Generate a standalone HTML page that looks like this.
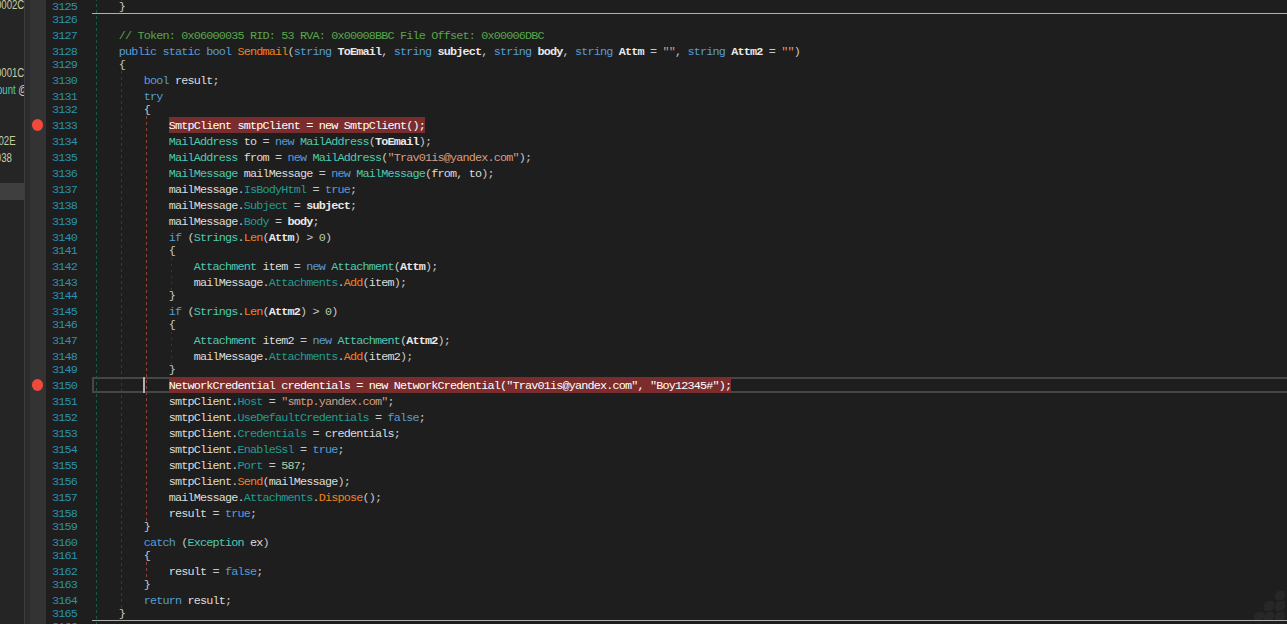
<!DOCTYPE html>
<html><head><meta charset="utf-8"><style>
html,body{margin:0;padding:0;width:1287px;height:624px;overflow:hidden;background:#1e1e1e;}
body{position:relative;font-family:"Liberation Mono",monospace;}
#left{position:absolute;left:0;top:0;width:24px;height:624px;background:#252526;overflow:hidden;}
#left .t{position:absolute;font-family:"Liberation Sans",sans-serif;font-size:13px;line-height:16px;white-space:pre;color:#c2cfa2;transform:scaleX(0.74);transform-origin:100% 50%;}
#div1{position:absolute;left:24px;top:0;width:1px;height:624px;background:#3c3c42;}
#strip{position:absolute;left:25px;top:0;width:5px;height:624px;background:#2c2c2c;}
#gutter{position:absolute;left:30px;top:0;width:16px;height:624px;background:#333333;}
.bp{position:absolute;left:31.8px;width:11.4px;height:12px;border-radius:50%;background:#f24a3a;}
.ln{position:absolute;left:46px;width:31px;text-align:right;font-size:11.8px;line-height:16px;letter-spacing:-0.83px;color:#2b91af;white-space:pre;}
.code{position:absolute;font-size:11.8px;line-height:16px;letter-spacing:-0.83px;white-space:pre;color:#dcdcdc;}
.hl{position:absolute;height:16px;background:#7b2d2d;}
.k{color:#569cd6} .c{color:#57a64a} .m{color:#f0821e} .t{color:#4ec9b0} .p{color:#e8e8e8;font-weight:bold}
.l{color:#dcdcdc} .r{color:#229c90} .s{color:#d69d85} .n{color:#b5cea8} .o{color:#c8c8c8} .d{color:#dcdcdc}
.hlt span{color:#ffffff}
.sep{position:absolute;left:92px;width:1195px;height:1px;background:#b0b0b0;}
.g{position:absolute;width:1px;}
.grip{position:absolute;width:9.5px;height:9.5px;border-radius:50% 20% 50% 20%;background:#272727;}
#cur{position:absolute;left:92px;top:377px;width:1195px;height:16px;box-sizing:border-box;border:2px solid #464646;border-right:none;}
#caret{position:absolute;left:143px;top:377px;width:2px;height:16px;background:#b0b0b0;}
</style></head><body>
<div id="left">
<div class="t" style="top:-3px;right:0">0002C</div>
<div class="t" style="top:65px;right:0">0001C</div>
<div class="t" style="top:82px;right:-4px"><span style="color:#4ec9b0">ount</span><span style="color:#d4d4d4"> @</span></div>
<div style="position:absolute;left:0;top:183px;width:24px;height:17px;background:#3f3f40"></div>
<div class="t" style="top:133px;right:8px">0002E</div>
<div class="t" style="top:150px;right:12px">0038</div>
</div>
<div id="div1"></div>
<div id="strip"></div>
<div id="gutter"></div>
<div class="bp" style="top:118.5px"></div>
<div class="bp" style="top:378.5px"></div>
<div class="g" style="left:96px;top:-2px;height:628px;background:repeating-linear-gradient(to bottom,#195843 0 3px,transparent 3px 6px)"></div>
<div class="g" style="left:121px;top:-1px;height:2px;background:repeating-linear-gradient(to bottom,#1a3f60 0 3px,transparent 3px 6px)"></div>
<div class="g" style="left:121px;top:71px;height:537px;background:repeating-linear-gradient(to bottom,#1a3f60 0 3px,transparent 3px 6px)"></div>
<div class="g" style="left:146px;top:116px;height:405px;background:repeating-linear-gradient(to bottom,#8e4639 0 3px,transparent 3px 6px)"></div>
<div class="g" style="left:146px;top:562px;height:17px;background:repeating-linear-gradient(to bottom,#8e4639 0 3px,transparent 3px 6px)"></div>
<div class="g" style="left:171px;top:258px;height:32px;background:repeating-linear-gradient(to bottom,#1a4a1e 0 2px,transparent 2px 6px)"></div>
<div class="g" style="left:171px;top:332px;height:32px;background:repeating-linear-gradient(to bottom,#1a4a1e 0 2px,transparent 2px 6px)"></div>
<div class="sep" style="top:13px"></div>
<div class="sep" style="top:620px"></div>
<div id="cur"></div>
<div class="ln" style="top:-1px">3125</div>
<div class="code" style="top:-1px;left:118.75px"><span class="o">}</span></div>
<div class="ln" style="top:12px">3126</div>
<div class="ln" style="top:28px">3127</div>
<div class="code" style="top:28px;left:118.75px"><span class="c">// Token: 0x06000035 RID: 53 RVA: 0x00008BBC File Offset: 0x00006DBC</span></div>
<div class="ln" style="top:44px">3128</div>
<div class="code" style="top:44px;left:118.75px"><span class="k">public</span><span class="d"> </span><span class="k">static</span><span class="d"> </span><span class="k">bool</span><span class="d"> </span><span class="m">Sendmail</span><span class="o">(</span><span class="k">string</span><span class="d"> </span><span class="p">ToEmail</span><span class="o">, </span><span class="k">string</span><span class="d"> </span><span class="p">subject</span><span class="o">, </span><span class="k">string</span><span class="d"> </span><span class="p">body</span><span class="o">, </span><span class="k">string</span><span class="d"> </span><span class="p">Attm</span><span class="o"> = </span><span class="s">&quot;&quot;</span><span class="o">, </span><span class="k">string</span><span class="d"> </span><span class="p">Attm2</span><span class="o"> = </span><span class="s">&quot;&quot;</span><span class="o">)</span></div>
<div class="ln" style="top:57px">3129</div>
<div class="code" style="top:57px;left:118.75px"><span class="o">{</span></div>
<div class="ln" style="top:73px">3130</div>
<div class="code" style="top:73px;left:143.75px"><span class="k">bool</span><span class="d"> </span><span class="l">result</span><span class="o">;</span></div>
<div class="ln" style="top:89px">3131</div>
<div class="code" style="top:89px;left:143.75px"><span class="k">try</span></div>
<div class="ln" style="top:102px">3132</div>
<div class="code" style="top:102px;left:143.75px"><span class="o">{</span></div>
<div class="ln" style="top:118px">3133</div>
<div class="hl" style="top:117px;left:168.75px;width:256.25px"></div>
<div class="code hlt" style="top:118px;left:168.75px"><span class="t">SmtpClient</span><span class="d"> </span><span class="l">smtpClient</span><span class="o"> = </span><span class="k">new</span><span class="d"> </span><span class="t">SmtpClient</span><span class="o">();</span></div>
<div class="ln" style="top:134px">3134</div>
<div class="code" style="top:134px;left:168.75px"><span class="t">MailAddress</span><span class="d"> </span><span class="l">to</span><span class="o"> = </span><span class="k">new</span><span class="d"> </span><span class="t">MailAddress</span><span class="o">(</span><span class="p">ToEmail</span><span class="o">);</span></div>
<div class="ln" style="top:150px">3135</div>
<div class="code" style="top:150px;left:168.75px"><span class="t">MailAddress</span><span class="d"> </span><span class="l">from</span><span class="o"> = </span><span class="k">new</span><span class="d"> </span><span class="t">MailAddress</span><span class="o">(</span><span class="s">&quot;Trav01is@yandex.com&quot;</span><span class="o">);</span></div>
<div class="ln" style="top:166px">3136</div>
<div class="code" style="top:166px;left:168.75px"><span class="t">MailMessage</span><span class="d"> </span><span class="l">mailMessage</span><span class="o"> = </span><span class="k">new</span><span class="d"> </span><span class="t">MailMessage</span><span class="o">(</span><span class="l">from</span><span class="o">, </span><span class="l">to</span><span class="o">);</span></div>
<div class="ln" style="top:182px">3137</div>
<div class="code" style="top:182px;left:168.75px"><span class="l">mailMessage</span><span class="o">.</span><span class="r">IsBodyHtml</span><span class="o"> = </span><span class="k">true</span><span class="o">;</span></div>
<div class="ln" style="top:198px">3138</div>
<div class="code" style="top:198px;left:168.75px"><span class="l">mailMessage</span><span class="o">.</span><span class="r">Subject</span><span class="o"> = </span><span class="p">subject</span><span class="o">;</span></div>
<div class="ln" style="top:214px">3139</div>
<div class="code" style="top:214px;left:168.75px"><span class="l">mailMessage</span><span class="o">.</span><span class="r">Body</span><span class="o"> = </span><span class="p">body</span><span class="o">;</span></div>
<div class="ln" style="top:230px">3140</div>
<div class="code" style="top:230px;left:168.75px"><span class="k">if</span><span class="d"> </span><span class="o">(</span><span class="t">Strings</span><span class="o">.</span><span class="m">Len</span><span class="o">(</span><span class="p">Attm</span><span class="o">) &gt; </span><span class="n">0</span><span class="o">)</span></div>
<div class="ln" style="top:243px">3141</div>
<div class="code" style="top:243px;left:168.75px"><span class="o">{</span></div>
<div class="ln" style="top:259px">3142</div>
<div class="code" style="top:259px;left:193.75px"><span class="t">Attachment</span><span class="d"> </span><span class="l">item</span><span class="o"> = </span><span class="k">new</span><span class="d"> </span><span class="t">Attachment</span><span class="o">(</span><span class="p">Attm</span><span class="o">);</span></div>
<div class="ln" style="top:275px">3143</div>
<div class="code" style="top:275px;left:193.75px"><span class="l">mailMessage</span><span class="o">.</span><span class="r">Attachments</span><span class="o">.</span><span class="m">Add</span><span class="o">(</span><span class="l">item</span><span class="o">);</span></div>
<div class="ln" style="top:288px">3144</div>
<div class="code" style="top:288px;left:168.75px"><span class="o">}</span></div>
<div class="ln" style="top:304px">3145</div>
<div class="code" style="top:304px;left:168.75px"><span class="k">if</span><span class="d"> </span><span class="o">(</span><span class="t">Strings</span><span class="o">.</span><span class="m">Len</span><span class="o">(</span><span class="p">Attm2</span><span class="o">) &gt; </span><span class="n">0</span><span class="o">)</span></div>
<div class="ln" style="top:317px">3146</div>
<div class="code" style="top:317px;left:168.75px"><span class="o">{</span></div>
<div class="ln" style="top:333px">3147</div>
<div class="code" style="top:333px;left:193.75px"><span class="t">Attachment</span><span class="d"> </span><span class="l">item2</span><span class="o"> = </span><span class="k">new</span><span class="d"> </span><span class="t">Attachment</span><span class="o">(</span><span class="p">Attm2</span><span class="o">);</span></div>
<div class="ln" style="top:349px">3148</div>
<div class="code" style="top:349px;left:193.75px"><span class="l">mailMessage</span><span class="o">.</span><span class="r">Attachments</span><span class="o">.</span><span class="m">Add</span><span class="o">(</span><span class="l">item2</span><span class="o">);</span></div>
<div class="ln" style="top:362px">3149</div>
<div class="code" style="top:362px;left:168.75px"><span class="o">}</span></div>
<div class="ln" style="top:378px">3150</div>
<div class="hl" style="top:377px;left:168.75px;width:562.50px"></div>
<div class="code hlt" style="top:378px;left:168.75px"><span class="t">NetworkCredential</span><span class="d"> </span><span class="l">credentials</span><span class="o"> = </span><span class="k">new</span><span class="d"> </span><span class="t">NetworkCredential</span><span class="o">(</span><span class="s">&quot;Trav01is@yandex.com&quot;</span><span class="o">, </span><span class="s">&quot;Boy12345#&quot;</span><span class="o">);</span></div>
<div class="ln" style="top:394px">3151</div>
<div class="code" style="top:394px;left:168.75px"><span class="l">smtpClient</span><span class="o">.</span><span class="r">Host</span><span class="o"> = </span><span class="s">&quot;smtp.yandex.com&quot;</span><span class="o">;</span></div>
<div class="ln" style="top:410px">3152</div>
<div class="code" style="top:410px;left:168.75px"><span class="l">smtpClient</span><span class="o">.</span><span class="r">UseDefaultCredentials</span><span class="o"> = </span><span class="k">false</span><span class="o">;</span></div>
<div class="ln" style="top:426px">3153</div>
<div class="code" style="top:426px;left:168.75px"><span class="l">smtpClient</span><span class="o">.</span><span class="r">Credentials</span><span class="o"> = </span><span class="l">credentials</span><span class="o">;</span></div>
<div class="ln" style="top:442px">3154</div>
<div class="code" style="top:442px;left:168.75px"><span class="l">smtpClient</span><span class="o">.</span><span class="r">EnableSsl</span><span class="o"> = </span><span class="k">true</span><span class="o">;</span></div>
<div class="ln" style="top:458px">3155</div>
<div class="code" style="top:458px;left:168.75px"><span class="l">smtpClient</span><span class="o">.</span><span class="r">Port</span><span class="o"> = </span><span class="n">587</span><span class="o">;</span></div>
<div class="ln" style="top:474px">3156</div>
<div class="code" style="top:474px;left:168.75px"><span class="l">smtpClient</span><span class="o">.</span><span class="m">Send</span><span class="o">(</span><span class="l">mailMessage</span><span class="o">);</span></div>
<div class="ln" style="top:490px">3157</div>
<div class="code" style="top:490px;left:168.75px"><span class="l">mailMessage</span><span class="o">.</span><span class="r">Attachments</span><span class="o">.</span><span class="m">Dispose</span><span class="o">();</span></div>
<div class="ln" style="top:506px">3158</div>
<div class="code" style="top:506px;left:168.75px"><span class="l">result</span><span class="o"> = </span><span class="k">true</span><span class="o">;</span></div>
<div class="ln" style="top:519px">3159</div>
<div class="code" style="top:519px;left:143.75px"><span class="o">}</span></div>
<div class="ln" style="top:535px">3160</div>
<div class="code" style="top:535px;left:143.75px"><span class="k">catch</span><span class="d"> </span><span class="o">(</span><span class="t">Exception</span><span class="d"> </span><span class="l">ex</span><span class="o">)</span></div>
<div class="ln" style="top:548px">3161</div>
<div class="code" style="top:548px;left:143.75px"><span class="o">{</span></div>
<div class="ln" style="top:564px">3162</div>
<div class="code" style="top:564px;left:168.75px"><span class="l">result</span><span class="o"> = </span><span class="k">false</span><span class="o">;</span></div>
<div class="ln" style="top:577px">3163</div>
<div class="code" style="top:577px;left:143.75px"><span class="o">}</span></div>
<div class="ln" style="top:593px">3164</div>
<div class="code" style="top:593px;left:143.75px"><span class="k">return</span><span class="d"> </span><span class="l">result</span><span class="o">;</span></div>
<div class="ln" style="top:606px">3165</div>
<div class="code" style="top:606px;left:118.75px"><span class="o">}</span></div>
<div class="ln" style="top:619px">3166</div>
<div class="ln" style="top:632px">3167</div>
<div id="caret"></div>
<div class="grip" style="left:1275px;top:590.5px"></div>
<div class="grip" style="left:1264px;top:601px"></div>
<div class="grip" style="left:1275px;top:601px"></div>
<div class="grip" style="left:1254px;top:611.5px"></div>
<div class="grip" style="left:1264px;top:611.5px"></div>
<div class="grip" style="left:1275px;top:611.5px"></div>
<div style="position:absolute;left:1240px;top:620px;width:47px;height:4px;background:#1e1e1e"></div>
<div class="sep" style="top:620px;left:1240px;width:47px"></div>
</body></html>
